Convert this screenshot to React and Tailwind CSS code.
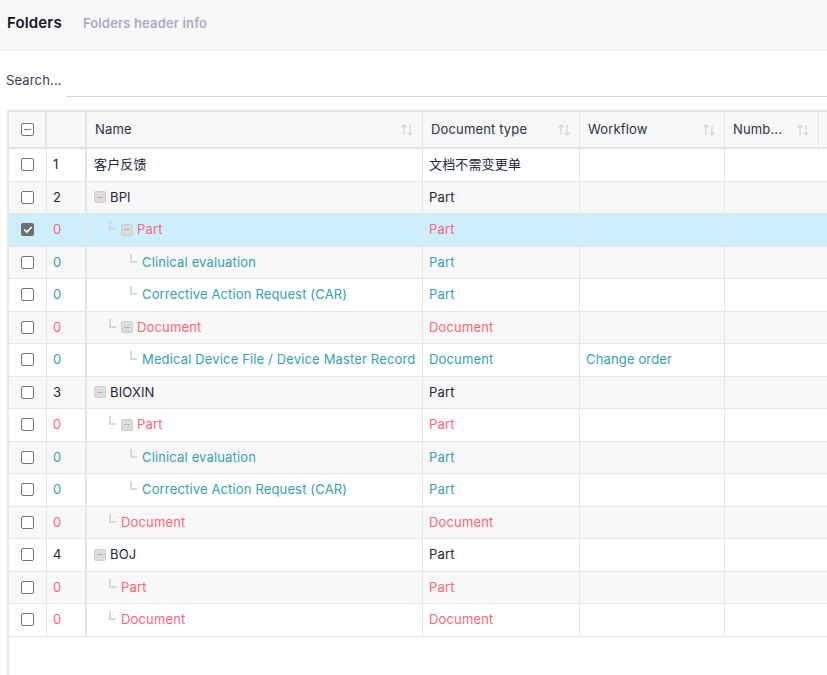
import { Check } from "lucide-react";

const rows = [
  { num: "1", name: "客户反馈", level: 0, box: false, type: "文档不需变更单", tone: "dark" },
  { num: "2", name: "BPI", level: 0, box: true, type: "Part", tone: "dark" },
  { num: "0", name: "Part", level: 1, box: true, type: "Part", tone: "red", selected: true },
  { num: "0", name: "Clinical evaluation", level: 2, box: false, type: "Part", tone: "teal" },
  { num: "0", name: "Corrective Action Request (CAR)", level: 2, box: false, type: "Part", tone: "teal" },
  { num: "0", name: "Document", level: 1, box: true, type: "Document", tone: "red" },
  { num: "0", name: "Medical Device File / Device Master Record", level: 2, box: false, type: "Document", tone: "teal", workflow: "Change order" },
  { num: "3", name: "BIOXIN", level: 0, box: true, type: "Part", tone: "dark" },
  { num: "0", name: "Part", level: 1, box: true, type: "Part", tone: "red" },
  { num: "0", name: "Clinical evaluation", level: 2, box: false, type: "Part", tone: "teal" },
  { num: "0", name: "Corrective Action Request (CAR)", level: 2, box: false, type: "Part", tone: "teal" },
  { num: "0", name: "Document", level: 1, box: false, type: "Document", tone: "red" },
  { num: "4", name: "BOJ", level: 0, box: true, type: "Part", tone: "dark" },
  { num: "0", name: "Part", level: 1, box: false, type: "Part", tone: "red" },
  { num: "0", name: "Document", level: 1, box: false, type: "Document", tone: "red" },
];

const toneClass = {
  dark: "text-[#23263a]",
  red: "text-[#ff6577]",
  teal: "text-[#35a2b2]",
};

function SortIcon() {
  return (
    <svg width="14" height="14" viewBox="0 0 14 14" className="shrink-0">
      <path d="M4 12V2M1.5 4.5L4 2l2.5 2.5" stroke="#d3d6db" strokeWidth="1.3" fill="none" />
      <path d="M10 2v10M7.5 9.5L10 12l2.5-2.5" stroke="#d3d6db" strokeWidth="1.3" fill="none" />
    </svg>
  );
}

function Checkbox({ checked, partial }) {
  if (checked) {
    return (
      <span className="w-[13px] h-[13px] rounded-[2px] bg-[#6f6f6f] flex items-center justify-center">
        <Check className="w-[10px] h-[10px] text-white" strokeWidth={4} />
      </span>
    );
  }
  return (
    <span className="w-[13px] h-[13px] rounded-[2px] border border-[#767676] bg-white flex items-center justify-center">
      {partial && <span className="w-[7px] h-[1.5px] bg-[#767676]" />}
    </span>
  );
}

function CollapseBox() {
  return (
    <span className="w-[12px] h-[12px] rounded-[2px] bg-[#dcdcdc] border border-[#cfcfcf] flex items-center justify-center shrink-0">
      <span className="w-[6px] h-px bg-[#b5b5b5]" />
    </span>
  );
}

function Elbow() {
  return <span className="w-[7px] h-[9px] border-l-2 border-b-2 border-[#d6d9de] -mt-[8px] shrink-0" />;
}

function HeaderCell({ width, label, sort }) {
  return (
    <div className={`${width} h-full flex items-center justify-between px-2 border-r border-[#e2e4e8]`}>
      <span className="truncate">{label}</span>
      {sort && <SortIcon />}
    </div>
  );
}

export default function App() {
  return (
    <div
      className="w-[827px] h-[675px] overflow-hidden bg-white text-[13px] tracking-[0.15px] text-[#23263a]"
      style={{ fontFamily: "Inter, 'Noto Sans CJK SC', sans-serif" }}
    >
      {/* Header */}
      <div className="h-[50px] bg-[#f8f8f8] border-b border-[#ececec] flex items-center gap-[21px] px-[7px] pb-[2px]">
        <span className="text-[15px] font-semibold text-[#141627]">Folders</span>
        <span className="text-[13px] font-semibold text-[#a9acbe]">Folders header info</span>
      </div>

      {/* Search */}
      <div className="h-[60px] flex items-start pt-[20px] pl-[6px]">
        <span className="text-[13px] text-[#3a3d52] mr-[4px] leading-[20px]">Search...</span>
        <div className="flex-1 h-[27px] border-b border-[#cfd3dc]" />
      </div>

      {/* Table */}
      <div className="ml-[7px] border-l-2 border-[#e4e6ea] h-[565px]">
        <div className="h-[39px] flex items-center bg-[#f8f8f8] border-t-2 border-b-2 border-[#e2e4e8] w-[900px] text-[#2d3046]">
          <div className="w-[38px] h-full flex items-center justify-center border-r-2 border-[#e2e4e8]">
            <Checkbox partial />
          </div>
          <div className="w-[40px] h-full border-r-2 border-[#e2e4e8]" />
          <HeaderCell width="w-[336px]" label="Name" sort />
          <HeaderCell width="w-[157px]" label="Document type" sort />
          <HeaderCell width="w-[145px]" label="Workflow" sort />
          <HeaderCell width="w-[94px]" label="Numb..." sort />
          <div className="flex-1 h-full" />
        </div>

        {rows.map((r, i) => (
          <div
            key={i}
            className={`h-[32.5px] flex items-center border-b border-[#e4e6ea] w-[900px] ${
              r.selected ? "bg-[#cdeefd]" : i % 2 === 1 ? "bg-[#f8f8f8]" : "bg-white"
            }`}
          >
            <div className="w-[38px] h-full flex items-center justify-center border-r border-[#e4e6ea]">
              <Checkbox checked={r.selected} />
            </div>
            <div className={`w-[40px] h-full flex items-center pl-[6px] border-r-2 border-[#e4e6ea] ${toneClass[r.tone]}`}>
              {r.num}
            </div>
            <div className={`w-[336px] h-full flex items-center border-r border-[#e4e6ea] ${toneClass[r.tone]}`}>
              {r.level === 0 && <span className="w-[7px] shrink-0" />}
              {r.level === 1 && <span className="w-[22px] shrink-0" />}
              {r.level === 2 && <span className="w-[43px] shrink-0" />}
              {r.level > 0 && <Elbow />}
              {r.level > 0 && <span className="w-[5px] shrink-0" />}
              {r.box && <CollapseBox />}
              <span className={r.box ? "ml-[4px]" : ""}>{r.name}</span>
            </div>
            <div className={`w-[157px] h-full flex items-center pl-[6px] border-r border-[#e4e6ea] ${toneClass[r.tone]}`}>
              {r.type}
            </div>
            <div className={`w-[145px] h-full flex items-center pl-[6px] border-r border-[#e4e6ea] ${toneClass[r.tone]}`}>
              {r.workflow}
            </div>
            <div className="w-[94px] h-full" />
            <div className="flex-1 h-full" />
          </div>
        ))}
      </div>
    </div>
  );
}
